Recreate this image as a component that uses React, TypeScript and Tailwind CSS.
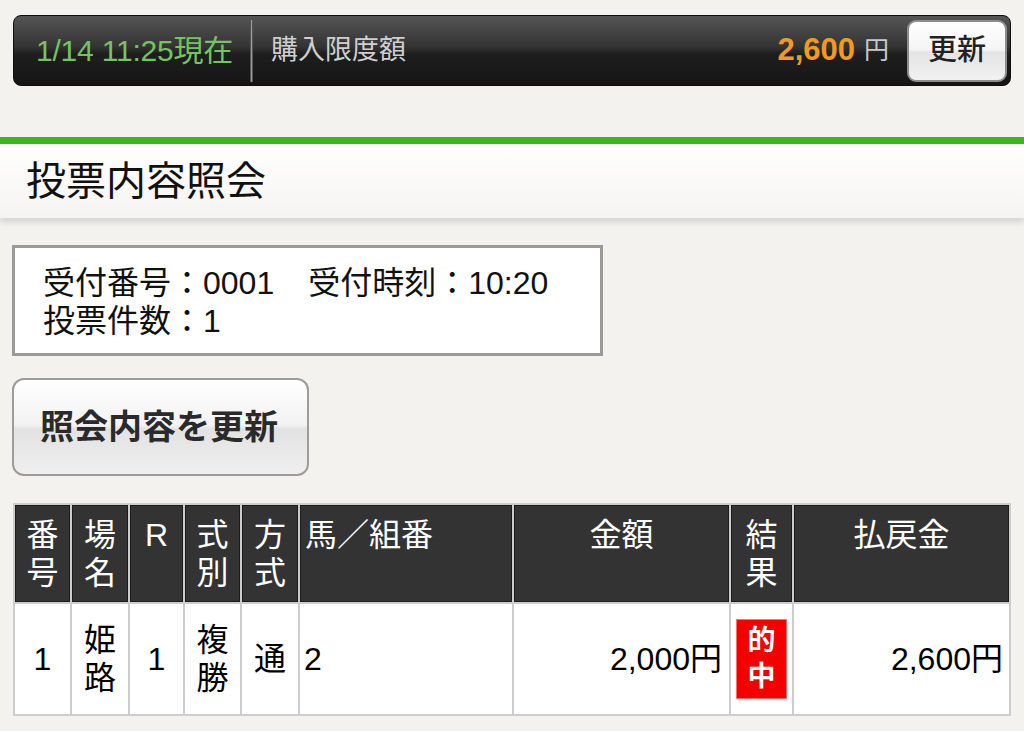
const HEAD = [
  { label: ["番", "号"], align: "center" },
  { label: ["場", "名"], align: "center" },
  { label: ["R"], align: "center" },
  { label: ["式", "別"], align: "center" },
  { label: ["方", "式"], align: "center" },
  { label: ["馬／組番"], align: "left" },
  { label: ["金額"], align: "center" },
  { label: ["結", "果"], align: "center" },
  { label: ["払戻金"], align: "center" },
];

function HeadCell({ label, align }: { label: string[]; align: string }) {
  return (
    <div
      className={`bg-[#333333] border border-[#1c1c1c] text-white pt-[10px] px-[4px] ${
        align === "left" ? "text-left" : "text-center"
      }`}
    >
      {label.map((l, i) => (
        <div key={i}>{l}</div>
      ))}
    </div>
  );
}

export default function App() {
  return (
    <div className="min-h-[731px] bg-[#f3f2ef] pt-[15px] pb-[14px] font-['Liberation_Sans','Noto_Sans_CJK_JP',sans-serif] overflow-hidden">
      {/* top status bar */}
      <div className="mx-[13px] h-[71px] rounded-[8px] border border-[#0e0e0e] bg-[linear-gradient(to_bottom,#555555_0%,#333333_45%,#1e1e1e_55%,#151515_100%)] flex items-center">
        <div className="w-[236px] pl-[22px] text-[30px] text-[#74c461] tracking-[-0.2px]">1/14 11:25現在</div>
        <div className="w-[3px] h-[62px] bg-[#9b9b9b] border-x border-[#555]" />
        <div className="ml-[18px] text-[27px] text-[#cfcfcf]">購入限度額</div>
        <div className="flex-1" />
        <div className="text-[31px] font-bold text-[#f29a20]">2,600</div>
        <div className="ml-[9px] text-[25px] text-[#c9c9c9]">円</div>
        <button className="ml-[18px] mr-[3px] w-[100px] h-[62px] rounded-[9px] border-2 border-[#8d8d8d] bg-[linear-gradient(to_bottom,#ffffff_0%,#f4f4f4_48%,#e4e4e4_52%,#f1f1f1_100%)] text-[29px] text-[#222] font-medium">
          更新
        </button>
      </div>

      {/* title */}
      <div className="mt-[51px] h-[7px] bg-[#3cb521]" />
      <div className="h-[74px] bg-[linear-gradient(to_bottom,#ffffff,#f5f4f1)] shadow-[0_4px_6px_rgba(0,0,0,0.13)] flex items-center pl-[26px] text-[40px] text-[#111]">
        投票内容照会
      </div>

      {/* info box */}
      <div className="mt-[27px] ml-[12px] w-[591px] border-[3px] border-[#9a9a9a] bg-white pl-[28px] pt-[16px] pb-[13px] text-[32px] leading-[38px] text-[#111]">
        <div>
          受付番号：0001<span className="inline-block w-[34px]" />受付時刻：10:20
        </div>
        <div>投票件数：1</div>
      </div>

      {/* refresh button */}
      <button className="mt-[22px] ml-[12px] w-[297px] h-[98px] rounded-[12px] border-2 border-[#9c9c9c] bg-[linear-gradient(to_bottom,#ffffff_0%,#f2f2f2_48%,#e2e2e2_52%,#efefef_100%)] text-[34px] font-bold text-[#2a2a2a] text-left pl-[26px]">
        照会内容を更新
      </button>

      {/* table */}
      <div className="mt-[27px] mx-[13px] bg-[#cdcdcd] p-[2px] grid grid-cols-[55px_56px_53px_55px_56px_212px_215px_61px_215px] grid-rows-[97px_110px] gap-[2px] text-[32px] leading-[38px]">
        {HEAD.map((h, i) => (
          <HeadCell key={i} label={h.label} align={h.align} />
        ))}
        <div className="bg-white flex items-center justify-center">1</div>
        <div className="bg-white flex flex-col items-center justify-center">
          <div>姫</div>
          <div>路</div>
        </div>
        <div className="bg-white flex items-center justify-center">1</div>
        <div className="bg-white flex flex-col items-center justify-center">
          <div>複</div>
          <div>勝</div>
        </div>
        <div className="bg-white flex items-center justify-center">通</div>
        <div className="bg-white flex items-center pl-[4px]">2</div>
        <div className="bg-white flex items-center justify-end pr-[7px]">2,000円</div>
        <div className="bg-white flex items-center justify-center">
          <div className="w-[51px] h-[80px] bg-[#f50000] border border-[#ff7070] flex flex-col items-center justify-center text-white font-bold text-[28px] leading-[36px]">
            <div>的</div>
            <div>中</div>
          </div>
        </div>
        <div className="bg-white flex items-center justify-end pr-[6px]">2,600円</div>
      </div>
    </div>
  );
}
